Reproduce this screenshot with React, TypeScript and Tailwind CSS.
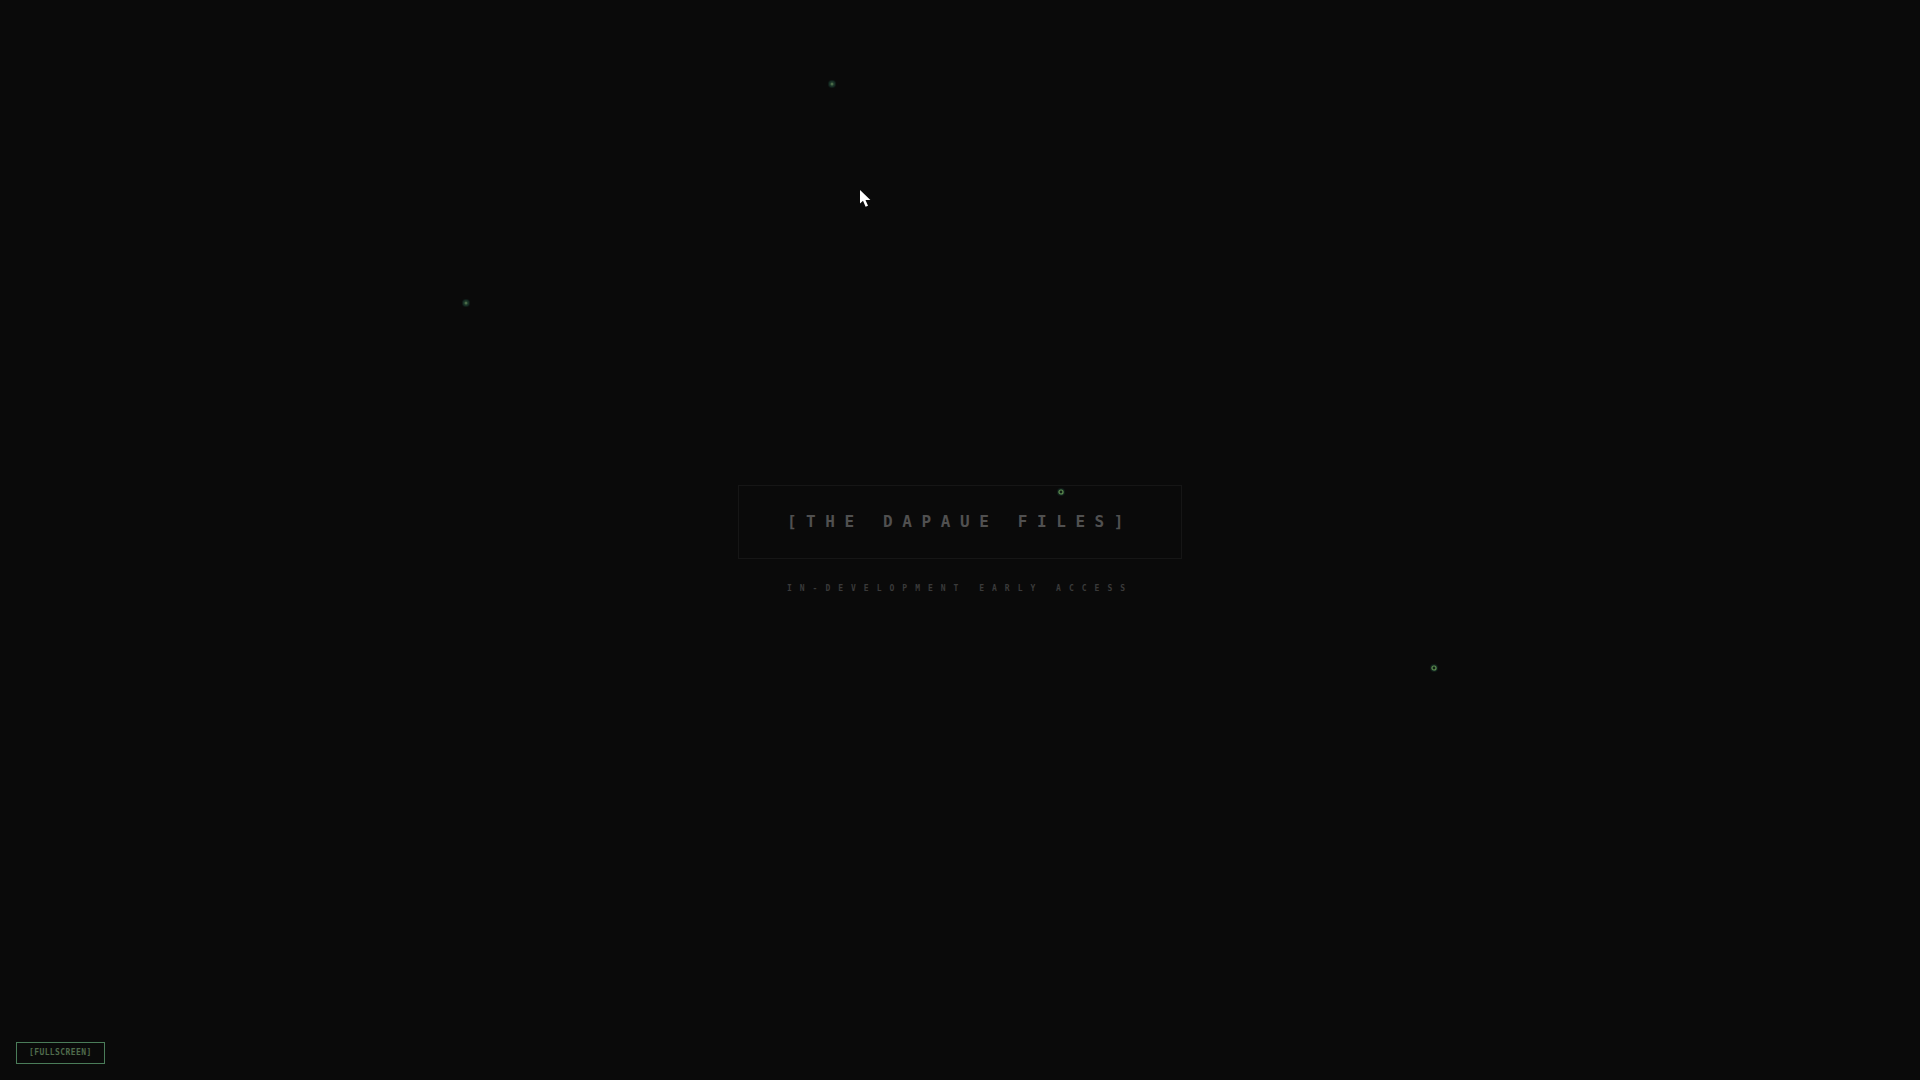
import React from 'react';

type Spark = { x: number; y: number; ring: boolean };

const sparks: Spark[] = [
  { x: 832, y: 84, ring: false },
  { x: 466, y: 303, ring: false },
  { x: 1061, y: 492, ring: true },
  { x: 1434, y: 668, ring: true },
];

const SparkDot: React.FC<Spark> = ({ x, y, ring }) => (
  <svg
    className="absolute size-3 -translate-1/2 pointer-events-none"
    style={{ left: `${(x / 1920) * 100}%`, top: `${(y / 1080) * 100}%` }}
    viewBox="0 0 12 12"
    aria-hidden="true"
  >
    <circle cx="6" cy="6" r="4" fill="#1f4a3c" opacity="0.3" />
    <circle cx="6" cy="6" r="3" fill="#2b5a40" opacity="0.4" />
    {ring ? (
      <circle cx="6" cy="6" r="2" fill="#0f1f14" stroke="#5c8a4e" strokeWidth="1.2" />
    ) : (
      <circle cx="6" cy="6" r="1.5" fill="#4a6b48" />
    )}
  </svg>
);

const Pointer: React.FC = () => (
  <svg
    className="absolute left-[44.8%] top-[17.6%] w-3 h-[18px] pointer-events-none"
    viewBox="0 0 12 18"
    aria-hidden="true"
  >
    <path d="M0 0v13.5l3-2.8 2.6 6 2.4-1-2.5-5.7h4.9z" fill="#fff" />
  </svg>
);

const App: React.FC = () => {
  return (
    <div className="relative min-h-screen flex flex-col bg-[#0a0a0a] overflow-hidden font-['DejaVu_Sans_Mono',monospace]">
      <main className="min-h-screen flex flex-col items-center justify-center">
        <h1 className="border border-[#161616] px-12 py-6 text-base leading-6 font-bold tracking-[0.6em] text-[#505050] whitespace-nowrap">
          [THE DAPAUE FILES]
        </h1>
        <p className="mt-6 text-[8px] leading-3 font-bold tracking-[1em] text-[#3a3a3a] whitespace-nowrap">
          IN-DEVELOPMENT EARLY ACCESS
        </p>
      </main>

      <button
        type="button"
        className="absolute left-4 bottom-4 border border-[#4a7c59] px-3 py-1 text-[8px] leading-3 font-bold tracking-wider text-[#4f6b4c] cursor-pointer"
      >
        [FULLSCREEN]
      </button>

      {sparks.map((s) => (
        <SparkDot key={`${s.x}-${s.y}`} {...s} />
      ))}
      <Pointer />
    </div>
  );
};

export default App;
